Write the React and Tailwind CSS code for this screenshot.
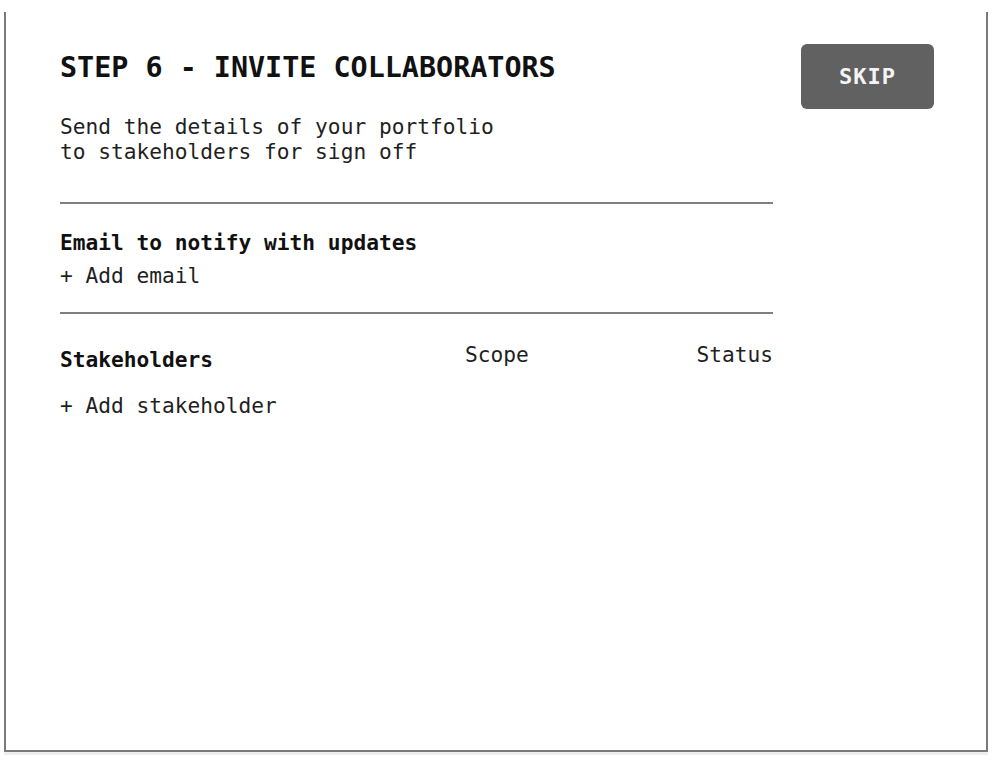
import React from 'react';

const mono = { fontFamily: '"DejaVu Sans Mono", "Liberation Mono", monospace' };

export default function App() {
  return (
    <div className="min-h-screen bg-white pt-[12px] px-[4px]" style={mono}>
      {/* Panel */}
      <div className="h-[740px] border-x-2 border-b-2 border-[#7a7a7a] flex gap-[28px] pl-[54px] pr-[51px] shadow-[0_3px_0_#efefef]">
        {/* Left content */}
        <div className="w-[713px] pt-[38px] text-[#1f1f1f]">
          <h1 className="text-[28.4px] leading-[36px] font-bold text-[#111]">
            STEP 6 - INVITE COLLABORATORS
          </h1>

          <p className="mt-[28px] text-[21.2px] leading-[25px]">
            Send the details of your portfolio
            <br />
            to stakeholders for sign off
          </p>

          <div className="mt-[38px] h-[2px] bg-[#808080]"></div>

          {/* Email section */}
          <div className="mt-[26px] text-[21.2px] leading-[25px] font-bold text-[#111]">
            Email to notify with updates
          </div>
          <div className="mt-[8px] text-[21.2px] leading-[25px]">+ Add email</div>

          <div className="mt-[24px] h-[2px] bg-[#808080]"></div>

          {/* Stakeholders table */}
          <div className="mt-[28px] grid grid-cols-[405px_1fr_auto] text-[21.2px] leading-[25px]">
            <div className="mt-[5px] font-bold text-[#111]">Stakeholders</div>
            <div>Scope</div>
            <div className="text-right">Status</div>
          </div>
          <div className="mt-[21px] text-[21.2px] leading-[25px]">+ Add stakeholder</div>
        </div>

        {/* Skip button */}
        <div className="pt-[32px]">
          <button className="w-[133px] h-[65px] rounded-[6px] bg-[#616161] text-[#f4f4f4] text-[22px] font-bold tracking-[1px]">
            SKIP
          </button>
        </div>
      </div>
    </div>
  );
}
